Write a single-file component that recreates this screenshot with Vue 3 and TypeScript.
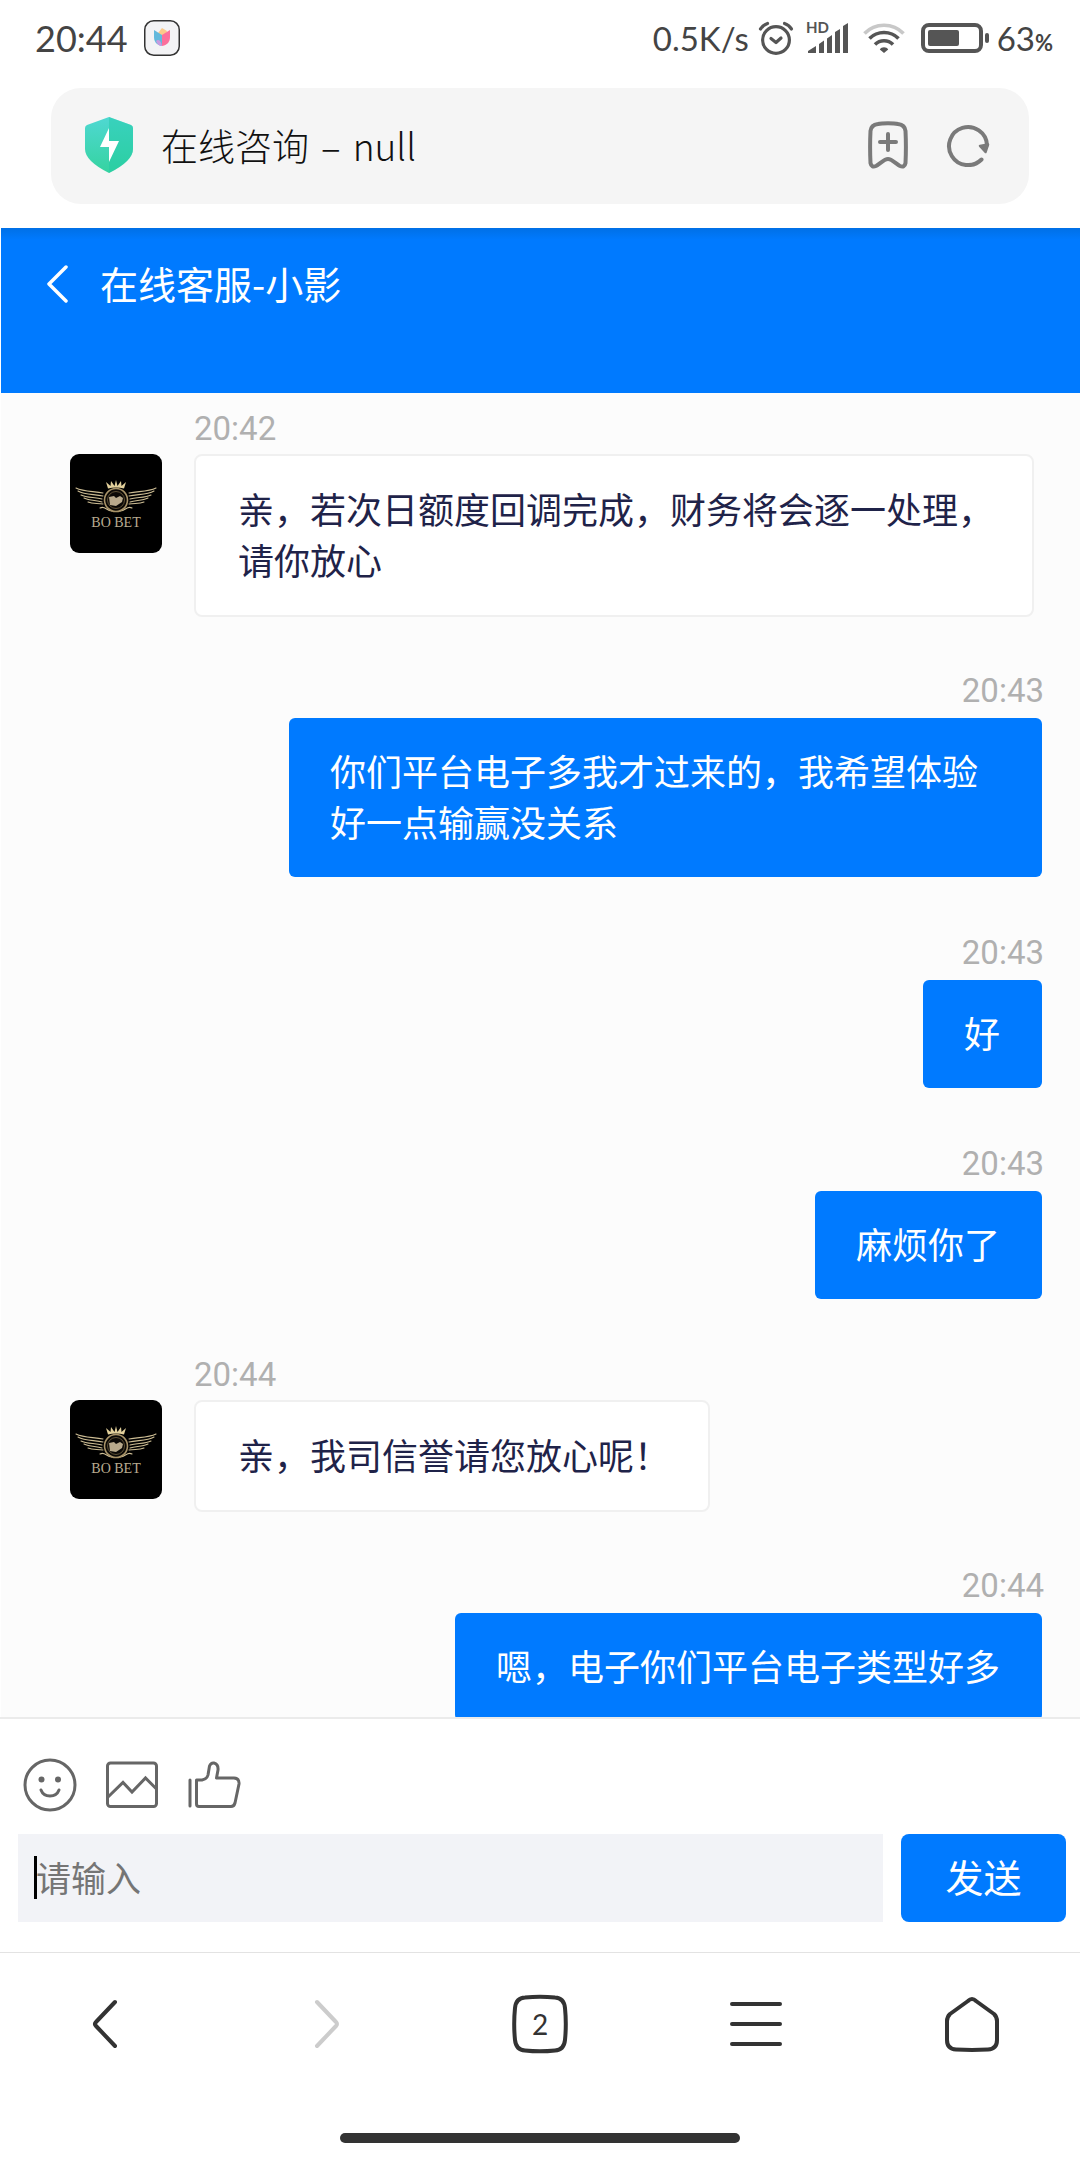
<script setup lang="ts">
import { ref } from 'vue'

interface Message {
  id: number
  from: 'agent' | 'me'
  time: string
  text: string
}

const messages = ref<Message[]>([
  { id: 1, from: 'agent', time: '20:42', text: '亲，若次日额度回调完成，财务将会逐一处理，请你放心' },
  { id: 2, from: 'me', time: '20:43', text: '你们平台电子多我才过来的，我希望体验好一点输赢没关系' },
  { id: 3, from: 'me', time: '20:43', text: '好' },
  { id: 4, from: 'me', time: '20:43', text: '麻烦你了' },
  { id: 5, from: 'agent', time: '20:44', text: '亲，我司信誉请您放心呢！' },
  { id: 6, from: 'me', time: '20:44', text: '嗯，电子你们平台电子类型好多' },
])

const draft = ref('')

function send() {
  const text = draft.value.trim()
  if (!text) return
  messages.value.push({ id: messages.value.length + 1, from: 'me', time: '20:44', text })
  draft.value = ''
}
</script>

<template>
  <div class="phone">
    <div class="status">
      <span class="clock">20:44</span>
      <svg class="app-badge" width="36" height="36" viewBox="0 0 36 36">
        <rect x="0.75" y="0.75" width="34.5" height="34.5" rx="9" fill="#f3f3f5" stroke="#333" stroke-width="1.5" />
        <path d="M14 13 L18 8 L23 11 L22 15 L18 17Z" fill="#fbc98a" />
        <path d="M10 10 L18 15 V26 C12 25 10 21 10 17Z" fill="#62b9dc" />
        <path d="M26 10 L18 15 V26 C24 25 26 21 26 17Z" fill="#fb6f9c" />
        <path d="M12 21 C14 19 17 20 18 26 C15 26 13 24 12 21Z" fill="#c79be0" />
      </svg>
      <span class="spring"></span>
      <span class="speed">0.5K/s</span>
      <svg class="alarm" width="36" height="36" viewBox="0 0 36 36" fill="none" stroke="#555" stroke-width="3.2" stroke-linecap="round" stroke-linejoin="round">
        <circle cx="18" cy="20" r="13.4" />
        <path d="M13 18.5 L18 22.5 L23 18" />
        <path d="M2.5 9 C4.500 6 6.500 4.500 9.500 3.500" />
        <path d="M33.500 9 C31.500 6 29.500 4.500 26.500 3.500" />
      </svg>
      <svg class="signal" width="44" height="40" viewBox="0 0 44 40">
        <text x="1" y="15" font-size="15" font-weight="700" fill="#555">HD</text>
        <path d="M3 35 V33 L11 28 V35Z M14 35 V26 L19 22.500 V35Z M22 35 V20.500 L27 17 V35Z M30 35 V14 L35 11 V35Z M38 35 V8 L43 5 V35Z" fill="#555" />
      </svg>
      <svg class="wifi" width="42" height="34" viewBox="0 0 42 34" fill="none" stroke-width="3.6">
        <path d="M1.500 12.500 C12 1.500 30 1.500 40.500 12.500" stroke="#c8c8c8" />
        <path d="M6.500 17.500 C14.500 9.500 27.500 9.500 35.500 17.500" stroke="#555" />
        <path d="M12 23.500 C17 18.500 25 18.500 30 23.500" stroke="#555" />
        <path d="M16.800 28.500 C18.500 25.500 23.500 25.500 25.200 28.500 L21 32Z" fill="#555" />
      </svg>
      <svg class="battery" width="68" height="30" viewBox="0 0 68 30">
        <rect x="2" y="2" width="58" height="26" rx="6" fill="none" stroke="#555" stroke-width="4" />
        <rect x="7" y="7" width="31" height="16" rx="2" fill="#555" />
        <rect x="64" y="10" width="4" height="10" rx="2" fill="#555" />
      </svg>
      <span class="level">63<small>%</small></span>
    </div>

    <div class="address">
      <svg width="48" height="56" viewBox="0 0 48 56">
        <defs>
          <linearGradient id="shield" x1="0" y1="0" x2="0" y2="1">
            <stop offset="0" stop-color="#4fd8d2" />
            <stop offset="1" stop-color="#35d3a0" />
          </linearGradient>
        </defs>
        <path d="M24 0 L46 8 Q48 9 48 11 V32 Q48 44 24 56 Q0 44 0 32 V11 Q0 9 2 8Z" fill="url(#shield)" />
        <path d="M24 0 L46 8 Q48 9 48 11 V32 Q48 44 24 56Z" fill="#1fc9a4" opacity=".45" />
        <path d="M24 11 L15 30 H24 V45 L34 24 H24Z" fill="#fff" />
      </svg>
      <span class="page-title"><span>在线咨询</span><span>–</span><span>null</span></span>
      <button class="plain" aria-label="添加书签">
        <svg width="40" height="48" viewBox="0 0 40 48" fill="none" stroke="#7a7a7a" stroke-width="4" stroke-linecap="round" stroke-linejoin="round">
          <path d="M10 3 C14 2 26 2 30 3 Q37 4 37.500 10 C38 20 38 32 37.500 42 Q36.500 47 32 45 C28 43 24 38 20 38 C16 38 12 43 8 45 Q3.500 47 2.500 42 C2 32 2 20 2.500 10 Q3 4 10 3Z" />
          <path d="M12 21 H28 M20 13 V29" />
        </svg>
      </button>
      <button class="plain" aria-label="刷新">
        <svg width="44" height="44" viewBox="0 0 44 44" fill="none" stroke="#7a7a7a" stroke-width="4" stroke-linecap="round">
          <path d="M35.500 36.500 A19 19 0 1 1 41 22" />
          <path d="M34 23 L42 21.500 L39.500 29Z" fill="#7a7a7a" stroke-width="2.500" stroke-linejoin="round" />
        </svg>
      </button>
    </div>

    <header class="chat-head">
      <button class="plain" aria-label="返回">
        <svg width="22" height="40" viewBox="0 0 22 40" fill="none" stroke="#fff" stroke-width="3.500" stroke-linecap="round" stroke-linejoin="round">
          <path d="M20 3 L3 20 L20 37" />
        </svg>
      </button>
      <h1>在线客服-小影</h1>
    </header>

    <main class="messages">
      <article v-for="m in messages" :key="m.id" class="message" :class="m.from">
        <svg v-if="m.from === 'agent'" class="avatar" width="92" height="99" viewBox="0 0 92 99">
          <rect width="92" height="99" rx="9" fill="#000" />
          <g fill="none" stroke="#cdbd94" stroke-width="1.1" stroke-linecap="round">
            <path d="M6 34 C14 38 24 37 33 39" />
            <path d="M8 37 C15 41 24 40 33 42" />
            <path d="M11 41 C17 44 25 43 32 45" />
            <path d="M14 44 C20 47 26 46 32 48" />
            <path d="M18 48 C23 50 27 49 33 50" />
            <path d="M86 34 C78 38 68 37 59 39" />
            <path d="M84 37 C77 41 68 40 59 42" />
            <path d="M81 41 C75 44 67 43 60 45" />
            <path d="M78 44 C72 47 66 46 60 48" />
            <path d="M74 48 C69 50 65 49 59 50" />
            <path d="M30 54 C35 51 36 57 42 57 M62 54 C57 51 56 57 50 57" />
          </g>
          <circle cx="46" cy="46" r="11.500" fill="#0b0906" stroke="#a89368" stroke-width="1.600" />
          <circle cx="46" cy="46" r="8.500" fill="none" stroke="#5d5035" />
          <path d="M39 43 L44 42 L46 44 L50 42 L53 44 L52 48 L46 52 L40 51Z" fill="#b9aa8c" />
          <path d="M38 34.500 L36 28 L40.500 32 L41 27 L44.500 32 L46 26 L47.500 32 L51 27 L51.500 32 L56 28 L54 34.500 Q46 32.500 38 34.500Z" fill="#e2d09b" />
          <text x="46" y="73" text-anchor="middle" font-size="14" fill="#b9ac90">BO BET</text>
        </svg>
        <div class="column">
          <time>{{ m.time }}</time>
          <p class="bubble">{{ m.text }}</p>
        </div>
      </article>
    </main>

    <form class="composer" @submit.prevent="send">
      <div class="tools">
        <button type="button" class="plain" aria-label="表情">
          <svg width="54" height="54" viewBox="0 0 54 54" fill="none" stroke="#666" stroke-width="3" stroke-linecap="round">
            <circle cx="27" cy="27" r="25" />
            <path d="M18 32 C21 40 33 40 36 32" />
            <circle cx="18.500" cy="21.500" r="3" fill="#666" stroke="none" />
            <circle cx="35" cy="21.500" r="3" fill="#666" stroke="none" />
          </svg>
        </button>
        <button type="button" class="plain" aria-label="图片">
          <svg width="54" height="54" viewBox="0 0 54 54" fill="none" stroke="#666" stroke-width="3">
            <rect x="2.500" y="5" width="49" height="43.500" rx="3" />
            <path d="M3 39 L18 24.500 L27 34 L40.500 20 L51 30.500" />
          </svg>
        </button>
        <button type="button" class="plain" aria-label="点赞">
          <svg width="54" height="54" viewBox="0 0 54 54" fill="none" stroke="#666" stroke-width="3" stroke-linejoin="round" stroke-linecap="round">
            <path d="M3 22 V48" />
            <path d="M9.500 22 H15 Q20 21 21 17 L22.500 8 Q24 4.500 27 5 Q31.500 6 31 12 L29.500 20 H47 Q52.500 20.500 52 26 L48 45 Q47 48.500 44 48.500 H12 Q9.500 48.500 9.500 46Z" />
          </svg>
        </button>
      </div>
      <div class="entry">
        <div class="field">
          <input v-model="draft" type="text" placeholder="请输入" aria-label="请输入" />
          <i class="caret"></i>
        </div>
        <button class="send" type="submit">发送</button>
      </div>
    </form>

    <nav class="browser-nav">
      <button class="plain" aria-label="后退">
        <svg width="60" height="60" viewBox="0 0 60 60" fill="none" stroke="#333" stroke-width="4" stroke-linecap="round" stroke-linejoin="round">
          <path d="M37 8 L18 28 Q16 30 18 32 L37 52" />
        </svg>
      </button>
      <button class="plain" aria-label="前进" disabled>
        <svg width="60" height="60" viewBox="0 0 60 60" fill="none" stroke="#ccc" stroke-width="4" stroke-linecap="round" stroke-linejoin="round">
          <path d="M23 8 L42 28 Q44 30 42 32 L23 52" />
        </svg>
      </button>
      <button class="plain" aria-label="标签页">
        <svg width="60" height="60" viewBox="0 0 60 60">
          <path d="M15 3.500 C24 2.500 36 2.500 45 3.500 Q54 4 55 14 C56 24 56 36 55 46 Q54 56 45 56.500 C36 57.500 24 57.500 15 56.500 Q6 56 5 46 C4 36 4 24 5 14 Q6 4 15 3.500Z" fill="none" stroke="#333" stroke-width="4" />
          <text x="30" y="41" text-anchor="middle" font-size="28" fill="#333">2</text>
        </svg>
      </button>
      <button class="plain" aria-label="菜单">
        <svg width="60" height="60" viewBox="0 0 60 60" stroke="#333" stroke-width="4" stroke-linecap="round">
          <path d="M6 10 H54 M6 30 H54 M6 50 H54" />
        </svg>
      </button>
      <button class="plain" aria-label="主页">
        <svg width="60" height="60" viewBox="0 0 60 60" fill="none" stroke="#333" stroke-width="4" stroke-linejoin="round">
          <path d="M26 7 Q30 3 34 7 L52 20 Q55 23 55 27 V46 Q55 55 46 55.500 C36 56 24 56 14 55.500 Q5 55 5 46 V27 Q5 23 8 20Z" />
        </svg>
      </button>
    </nav>
    <div class="gesture"><span></span></div>
  </div>
</template>

<style>
body {
  background: #fff;
}
</style>

<style scoped>
.phone {
  display: flex;
  flex-direction: column;
  height: 100vh;
  box-sizing: border-box;
  font-family: Roboto, "Noto Sans CJK SC", sans-serif;
  background: #fff;
}

.plain {
  display: flex;
  align-items: center;
  justify-content: center;
  padding: 0;
  border: 0;
  background: none;
  font-family: inherit;
}

.status {
  display: flex;
  flex: none;
  align-items: center;
  height: 76px;
  padding: 0 27px 0 35px;
  font-family: Lato, sans-serif;
  font-size: 33px;
  color: #444;
}

.clock {
  font-size: 36px;
}

.app-badge {
  margin-left: 16px;
}

.spring {
  flex: 1;
}

.alarm {
  margin-left: 9px;
}

.signal {
  margin-left: 11px;
}

.wifi {
  margin-left: 14px;
}

.battery {
  margin: 0 8px 0 16px;
}

.level small {
  font-size: 22px;
  font-weight: 700;
}

.address {
  display: flex;
  flex: none;
  align-items: center;
  height: 116px;
  margin: 12px 51px 24px;
  padding: 0 39px 2px 34px;
  box-sizing: border-box;
  border-radius: 30px;
  background: #f5f5f5;
}

.page-title {
  display: flex;
  flex: 1;
  gap: 12px;
  margin-left: 28px;
  font-family: "Noto Sans CJK SC", sans-serif;
  font-size: 37px;
  font-weight: 300;
  line-height: 52px;
  color: #111;
}

.address .plain + .plain {
  margin-left: 38px;
}

.chat-head {
  display: flex;
  flex: none;
  align-items: flex-start;
  height: 165px;
  margin-left: 1px;
  padding: 36px 45px 0;
  box-sizing: border-box;
  background: linear-gradient(#0070e6, #007aff 12px);
  color: #fff;
}

.chat-head h1 {
  margin: 0 0 0 32px;
  font-family: "Noto Sans CJK SC", sans-serif;
  font-size: 38px;
  font-weight: 400;
  line-height: 38px;
}

.messages {
  flex: 1;
  min-height: 0;
  margin-left: 1px;
  padding-top: 16px;
  overflow-y: auto;
  scrollbar-width: none;
  background: #fcfcfc;
}

.message {
  display: flex;
  gap: 32px;
  margin-bottom: 54px;
  padding: 0 36px 0 69px;
}

.avatar {
  flex: none;
  margin-top: 45px;
  font-family: "Liberation Serif", serif;
}

.column {
  display: flex;
  flex-direction: column;
  align-items: flex-start;
}

time {
  margin-bottom: 5px;
  font-size: 33px;
  line-height: 40px;
  color: #b0b0b0;
}

.bubble {
  max-width: 840px;
  margin: 0;
  padding: 27px 38px 30px 42px;
  box-sizing: border-box;
  border: 2px solid #f0f0f0;
  border-radius: 8px;
  background: #fff;
  font-family: "Noto Sans CJK SC", sans-serif;
  font-size: 36px;
  line-height: 51px;
  color: #1f2349;
}

.me {
  justify-content: flex-end;
}

.me .column {
  align-items: flex-end;
}

.me .bubble {
  max-width: 757px;
  padding: 27px 42px 30px 41px;
  border-color: transparent;
  background: #007aff;
  background-clip: padding-box;
  color: #fff;
}

.composer {
  flex: none;
  padding: 39px 14px 30px 18px;
  border-top: 2px solid #ebebeb;
}

.tools {
  display: flex;
  gap: 28px;
  padding-left: 5px;
}

.entry {
  display: flex;
  gap: 18px;
  margin-top: 22px;
}

.field {
  position: relative;
  flex: 1;
}

.field input {
  width: 100%;
  height: 88px;
  padding: 0 18px 4px;
  box-sizing: border-box;
  border: 0;
  outline: 0;
  background: #f2f3f7;
  font-family: "Noto Sans CJK SC", sans-serif;
  font-size: 35px;
}

.field input::placeholder {
  color: #757575;
  opacity: 1;
}

.caret {
  position: absolute;
  top: 22px;
  left: 16px;
  width: 3px;
  height: 43px;
  background: #000;
}

.send {
  width: 165px;
  height: 88px;
  padding: 0 0 6px;
  border: 0;
  border-radius: 8px;
  background: #007aff;
  font-family: "Noto Sans CJK SC", sans-serif;
  font-size: 38px;
  color: #fff;
}

.browser-nav {
  display: grid;
  flex: none;
  grid-template-columns: repeat(5, 1fr);
  height: 144px;
  padding-bottom: 2px;
  box-sizing: border-box;
  border-top: 1px solid #e3e3e3;
  font-family: Lato, sans-serif;
}

.gesture {
  display: flex;
  flex: none;
  justify-content: center;
  align-items: center;
  height: 44px;
  margin-top: 20px;
}

.gesture span {
  width: 37%;
  height: 10px;
  border-radius: 5px;
  background: #333;
}
</style>
